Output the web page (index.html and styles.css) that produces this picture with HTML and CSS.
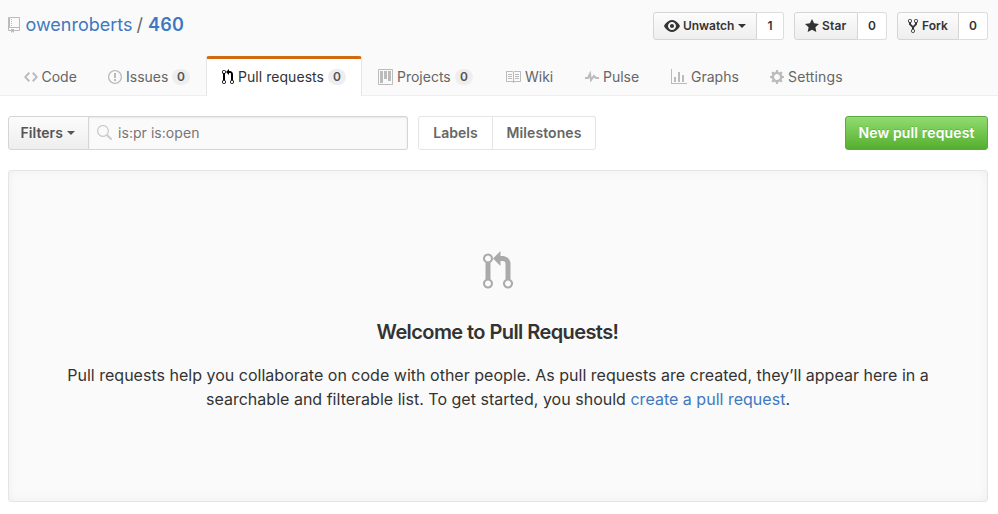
FILE: index.html
```
<!DOCTYPE html>
<html lang="en">
<head>
<meta charset="utf-8">
<title>Pull requests · owenroberts/460</title>
<link rel="stylesheet" href="styles.css">
</head>
<body>
<header class="repohead">
  <div class="repohead-top">
    <h1 class="repo-title">
      <svg class="repo-icon" width="12" height="16" viewBox="0 0 12 16"><path d="M4 9H3V8h1v1zm0-3H3v1h1V6zm0-2H3v1h1V4zm0-2H3v1h1V2zm8-1v12c0 .55-.45 1-1 1H6v2l-1.5-1.5L3 16v-2H1c-.55 0-1-.45-1-1V1c0-.55.45-1 1-1h10c.55 0 1 .45 1 1zm-1 10H1v2h2v-1h3v1h5v-2zm0-10H2v9h9V1z"/></svg>
      <a class="owner" href="#">owenroberts</a><span class="slash">/</span><a class="repo" href="#">460</a>
    </h1>
    <ul class="actions">
      <li class="action watch"><a class="btn-sm" href="#"><svg width="16" height="16" viewBox="0 0 16 16"><path d="M8.06 2C3 2 0 8 0 8s3 6 8.06 6C13 14 16 8 16 8s-3-6-7.94-6zM8 12c-2.2 0-4-1.78-4-4 0-2.2 1.8-4 4-4 2.22 0 4 1.8 4 4 0 2.22-1.78 4-4 4zm2-4c0 1.11-.89 2-2 2-1.11 0-2-.89-2-2 0-1.11.89-2 2-2 1.11 0 2 .89 2 2z"/></svg><span class="label">Unwatch</span><i class="caret"></i></a><a class="count" href="#">1</a></li>
      <li class="action star"><a class="btn-sm" href="#"><svg width="14" height="16" viewBox="0 0 14 16"><path d="M14 6l-4.9-.64L7 1 4.900 5.360 0 6l3.600 3.260L2.670 14 7 11.670 11.330 14l-.93-4.740z"/></svg><span class="label">Star</span></a><a class="count" href="#">0</a></li>
      <li class="action fork"><a class="btn-sm" href="#"><svg width="10" height="16" viewBox="0 0 10 16"><path d="M8 1a1.993 1.993 0 0 0-1 3.720V6L5 8 3 6V4.720A1.993 1.993 0 0 0 2 1a1.993 1.993 0 0 0-1 3.720V6.500l3 3v1.780A1.993 1.993 0 0 0 5 15a1.993 1.993 0 0 0 1-3.720V9.500l3-3V4.720A1.993 1.993 0 0 0 8 1zM2 4.200C1.340 4.200.8 3.650.8 3c0-.65.55-1.200 1.200-1.200.65 0 1.200.55 1.200 1.200 0 .65-.55 1.200-1.200 1.200zm3 10c-.66 0-1.200-.55-1.200-1.200 0-.65.55-1.200 1.200-1.200.65 0 1.200.55 1.200 1.200 0 .65-.55 1.200-1.200 1.200zm3-10c-.66 0-1.200-.55-1.200-1.200 0-.65.55-1.200 1.200-1.200.65 0 1.200.55 1.200 1.200 0 .65-.55 1.200-1.200 1.200z"/></svg><span class="label">Fork</span></a><a class="count" href="#">0</a></li>
    </ul>
  </div>
  <nav class="tabs">
    <a class="tab code" href="#"><svg width="14" height="16" viewBox="0 0 14 16"><path d="M9.500 3L8 4.500 11.500 8 8 11.500 9.500 13 14 8 9.500 3zm-5 0L0 8l4.500 5L6 11.500 2.500 8 6 4.500 4.500 3z"/></svg><span class="name">Code</span></a>
    <a class="tab issues" href="#"><svg width="14" height="16" viewBox="0 0 14 16"><path d="M7 2.300c3.140 0 5.700 2.560 5.700 5.700s-2.560 5.700-5.700 5.700A5.710 5.710 0 0 1 1.300 8c0-3.140 2.560-5.700 5.700-5.700zM7 1C3.140 1 0 4.140 0 8s3.140 7 7 7 7-3.140 7-7-3.140-7-7-7zm1 3H6v5h2V4zm0 6H6v2h2v-2z"/></svg><span class="name">Issues</span><span class="counter">0</span></a>
    <a class="tab pulls selected" href="#"><svg width="12" height="16" viewBox="0 0 12 16"><path d="M11 11.280V5c-.03-.78-.34-1.470-.94-2.060C9.460 2.350 8.780 2.030 8 2H7V0L4 3l3 3V4h1c.27.02.48.11.69.31.21.2.3.42.31.69v6.280A1.993 1.993 0 0 0 10 15a1.993 1.993 0 0 0 1-3.720zm-1 2.920c-.66 0-1.200-.55-1.200-1.200 0-.65.55-1.200 1.200-1.200.65 0 1.200.55 1.200 1.200 0 .65-.55 1.200-1.200 1.200zM4 3c0-1.110-.89-2-2-2a1.993 1.993 0 0 0-1 3.720v6.560A1.993 1.993 0 0 0 2 15a1.993 1.993 0 0 0 1-3.720V4.720c.59-.34 1-.98 1-1.720zm-.8 10c0 .66-.55 1.200-1.200 1.200-.65 0-1.200-.55-1.200-1.200 0-.65.55-1.200 1.200-1.200.65 0 1.200.55 1.200 1.200zM2 4.200C1.340 4.200.8 3.650.8 3c0-.65.55-1.200 1.200-1.200.65 0 1.200.55 1.200 1.200 0 .65-.55 1.200-1.200 1.200z"/></svg><span class="name">Pull requests</span><span class="counter">0</span></a>
    <a class="tab projects" href="#"><svg width="15" height="16" viewBox="0 0 15 16"><path fill-rule="evenodd" d="M10 12h3V2h-3v10zm-4-2h3V2H6v8zm-4 4h3V2H2v12zm-1 1h13V1H1v14zM14 0H1a1 1 0 0 0-1 1v14a1 1 0 0 0 1 1h13a1 1 0 0 0 1-1V1a1 1 0 0 0-1-1z"/></svg><span class="name">Projects</span><span class="counter">0</span></a>
    <a class="tab wiki" href="#"><svg width="16" height="16" viewBox="0 0 16 16"><path d="M3 5h4v1H3V5zm0 3h4V7H3v1zm0 2h4V9H3v1zm11-5h-4v1h4V5zm0 2h-4v1h4V7zm0 2h-4v1h4V9zm2-6v9c0 .55-.45 1-1 1H9.500l-1 1-1-1H2c-.55 0-1-.45-1-1V3c0-.55.45-1 1-1h5.500l1 1 1-1H15c.55 0 1 .45 1 1zm-8 .5L7.500 3H2v9h6V3.500zm7-.5H9.500l-.5.5V12h6V3z"/></svg><span class="name">Wiki</span></a>
    <a class="tab pulse" href="#"><svg width="14" height="16" viewBox="0 0 14 16"><path d="M11.500 8L8.800 5.400 6.600 8.500 5.500 1.600 2.380 8H0v2h3.600l.9-1.800.9 5.400L9 8.500l1.600 1.500H14V8z"/></svg><span class="name">Pulse</span></a>
    <a class="tab graphs" href="#"><svg width="16" height="16" viewBox="0 0 16 16"><path d="M16 14v1H0V0h1v14h15zM5 13H3V8h2v5zm4 0H7V3h2v10zm4 0h-2V6h2v7z"/></svg><span class="name">Graphs</span></a>
    <a class="tab settings" href="#"><svg width="14" height="16" viewBox="0 0 14 16"><path d="M14 8.770v-1.600l-1.940-.64-.45-1.090.88-1.840-1.130-1.130-1.810.91-1.090-.45-.69-1.920h-1.600l-.63 1.940-1.110.45-1.840-.88-1.130 1.130.91 1.810-.45 1.090L0 7.230v1.590l1.940.64.45 1.090-.88 1.840 1.130 1.130 1.810-.91 1.090.45.69 1.920h1.590l.63-1.940 1.110-.45 1.840.88 1.130-1.130-.92-1.810.47-1.090L14 8.750v.02zM7 11c-1.660 0-3-1.340-3-3s1.340-3 3-3 3 1.340 3 3-1.340 3-3 3z"/></svg><span class="name">Settings</span></a>
  </nav>
</header>
<main class="content">
  <div class="subnav">
    <button class="filters"><span>Filters</span><i class="caret"></i></button>
    <div class="search"><svg width="16" height="16" viewBox="0 0 16 16"><path d="M15.700 13.300l-3.810-3.830A5.930 5.930 0 0 0 13 6c0-3.310-2.690-6-6-6S1 2.690 1 6s2.690 6 6 6c1.300 0 2.480-.41 3.470-1.110l3.830 3.810c.19.2.45.3.7.3.25 0 .52-.09.7-.3a.996.996 0 0 0 0-1.410v.01zM7 10.700c-2.590 0-4.700-2.110-4.700-4.700 0-2.590 2.110-4.700 4.700-4.700 2.590 0 4.700 2.110 4.700 4.700 0 2.590-2.110 4.700-4.700 4.700z"/></svg><span>is:pr is:open</span></div>
    <div class="links"><a class="labels" href="#"><span>Labels</span></a><a class="milestones" href="#"><span>Milestones</span></a></div>
    <button class="new-pr"><span>New pull request</span></button>
  </div>
  <section class="blankslate">
    <svg width="30" height="40" viewBox="0 0 12 16"><path d="M11 11.280V5c-.03-.78-.34-1.470-.94-2.060C9.460 2.350 8.780 2.030 8 2H7V0L4 3l3 3V4h1c.27.02.48.11.69.31.21.2.3.42.31.69v6.280A1.993 1.993 0 0 0 10 15a1.993 1.993 0 0 0 1-3.720zm-1 2.920c-.66 0-1.200-.55-1.200-1.200 0-.65.55-1.200 1.200-1.200.65 0 1.200.55 1.200 1.200 0 .65-.55 1.200-1.200 1.200zM4 3c0-1.110-.89-2-2-2a1.993 1.993 0 0 0-1 3.720v6.560A1.993 1.993 0 0 0 2 15a1.993 1.993 0 0 0 1-3.720V4.720c.59-.34 1-.98 1-1.720zm-.8 10c0 .66-.55 1.200-1.200 1.200-.65 0-1.200-.55-1.200-1.200 0-.65.55-1.200 1.200-1.200.65 0 1.200.55 1.200 1.200zM2 4.200C1.340 4.200.8 3.650.8 3c0-.65.55-1.200 1.200-1.200.65 0 1.200.55 1.200 1.200 0 .65-.55 1.200-1.200 1.200z"/></svg>
    <h3>Welcome to Pull Requests!</h3>
    <p><span class="line1">Pull requests help you collaborate on code with other people. As pull requests are created, they’ll appear here in a</span><br><span class="line2">searchable and filterable list. To get started, you should <a href="#">create a pull request</a>.</span></p>
  </section>
</main>
</body>
</html>
```
FILE: styles.css
```
* { box-sizing: border-box; }
body { margin: 0; background: #fff; color: #333; font: 14px/20px Inter, "Liberation Sans", sans-serif; white-space: nowrap; }
a { color: #4078c0; text-decoration: none; }
svg { flex: none; fill: currentColor; }
button { font: inherit; margin: 0; cursor: pointer; }

.caret { width: 0; height: 0; border: 4px solid transparent; border-top-color: currentColor; border-bottom: 0; }

.repohead { display: flex; flex-direction: column; height: 96px; background: #fafafa; box-shadow: inset 0 -1px #eee; }
.repohead-top { display: flex; flex: none; justify-content: space-between; height: 56px; padding: 12px 10px 0 8px; }
.repo-title { display: flex; height: 26px; margin: 0; font-size: 18px; line-height: 26px; font-weight: 400; }
.repo-icon { width: 12px; margin: 5px 5.500px 0 0; color: #bbb; }
.owner { width: 106px; }
.slash { width: 16.500px; text-align: center; color: #666; }
.repo { font-weight: 600; letter-spacing: .2px; }

.actions { display: flex; gap: 10px; margin: 0; padding: 0; list-style: none; }
.action { display: flex; height: 28px; font-size: 12px; line-height: 26px; font-weight: 600; }
.action a { color: #333; }
.btn-sm { display: flex; align-items: center; padding-left: 10px; border: 1px solid #d5d5d5; border-radius: 3px 0 0 3px; background: linear-gradient(#fcfcfc, #eee); }
.btn-sm .label { margin-left: 3px; letter-spacing: .05px; }
.btn-sm .caret { margin-left: 4px; }
.count { flex: 1; border: 1px solid #ddd; border-left: 0; border-radius: 0 3px 3px 0; background: #fff; text-align: center; }
.watch { width: 131px; }
.watch .btn-sm { width: 104px; }
.watch .label { letter-spacing: -.05px; }
.star { width: 93px; }
.star .btn-sm { width: 64px; }
.star .label { letter-spacing: .2px; }
.fork { width: 91px; }
.fork .btn-sm { width: 62px; }
.fork .label { margin-left: 4px; }

.tabs { display: flex; flex: none; height: 40px; padding-left: 8px; }
.tab { display: flex; flex: none; align-items: center; height: 40px; padding: 2px 0 0 16px; color: #666; }
.tab svg { color: #bbb; }
.tab .name { margin-left: 4px; }
.counter { width: 18px; height: 16px; margin-left: auto; border-radius: 8px; background: #eee; color: #555; font-size: 12px; line-height: 16px; font-weight: 600; text-align: center; }
.tab.code { width: 84px; }
.tab.code .name { margin-left: 3.500px; }
.tab.issues { width: 114px; padding-right: 16px; }
.tab.pulls { width: 156px; padding-right: 15px; }
.tab.projects { width: 127px; padding-right: 16px; }
.tab.wiki { width: 80px; }
.tab.pulse { width: 86px; }
.tab.graphs { width: 99px; }
.tab.settings { width: 90px; }
.tab.settings .name { letter-spacing: .15px; }
.tab.selected { border: 1px solid #e5e5e5; border-top: 3px solid #d26911; border-bottom: 0; border-radius: 3px 3px 0 0; background: #fff; padding-top: 0; padding-bottom: 1px; padding-left: 15px; color: #333; }
.tab.selected .name { letter-spacing: .05px; }
.tab.selected svg { color: #000; }

.content { padding: 20px 10px 0 8px; }
.subnav { display: flex; height: 34px; margin-bottom: 20px; line-height: 32px; }
.filters { display: flex; align-items: center; width: 81px; padding: 0 0 0 11.500px; border: 1px solid #d5d5d5; border-radius: 3px 0 0 3px; background: linear-gradient(#fcfcfc, #eee); color: #555; font-weight: 600; letter-spacing: .05px; }
.filters .caret { margin-left: 4px; }
.search { display: flex; align-items: center; width: 319px; padding-left: 7px; border: 1px solid #d5d5d5; border-left: 0; border-radius: 0 3px 3px 0; background: #fafafa; box-shadow: inset 0 1px 2px rgba(0, 0, 0, .075); color: #767676; }
.search svg { margin-right: 6px; color: #ccc; }
.search span { letter-spacing: .05px; }
.links { display: flex; margin-left: 10px; font-weight: 600; text-align: center; }
.links a { border: 1px solid #e5e5e5; color: #666; }
.labels { width: 75px; border-radius: 3px 0 0 3px; letter-spacing: .05px; }
.links .milestones { width: 103px; border-left: 0; border-radius: 0 3px 3px 0; letter-spacing: .08px; }
.new-pr { width: 143px; margin-left: auto; padding: 0; border: 1px solid #5ca941; border-radius: 3px; background: linear-gradient(#91dd70, #55ae2e); color: #fff; font-weight: 600; letter-spacing: .14px; text-shadow: 0 -1px 0 rgba(0, 0, 0, .15); }

.blankslate { display: flex; flex-direction: column; align-items: center; height: 332px; padding-top: 80px; border: 1px solid #e5e5e5; border-radius: 3px; background: #fafafa; box-shadow: inset 0 0 10px rgba(0, 0, 0, .05); text-align: center; }
.blankslate svg { color: #aaa; }
.blankslate h3 { margin: 28px 0 0; padding-right: 1px; font-size: 20px; line-height: 26px; font-weight: 600; letter-spacing: -.58px; }
.blankslate p { margin: 18px 0 0; font-size: 16px; line-height: 24px; letter-spacing: .015px; }
```
